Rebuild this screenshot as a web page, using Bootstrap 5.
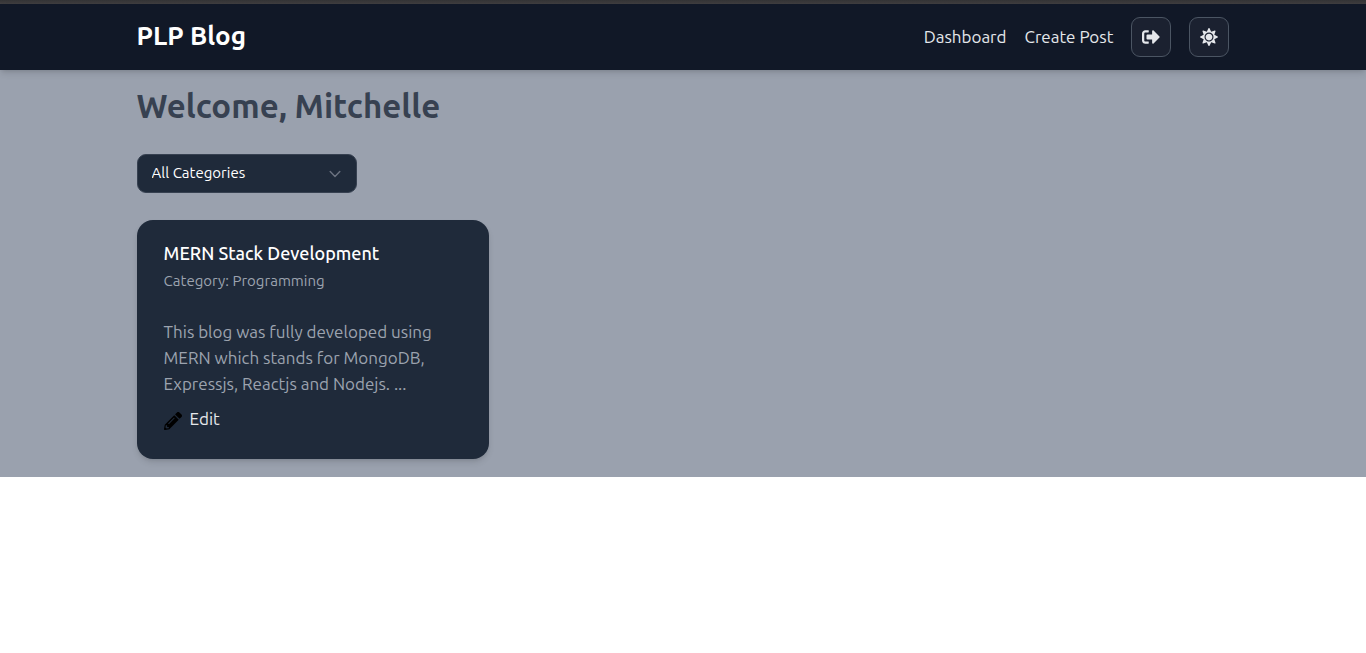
<!DOCTYPE html>
<html lang="en">
<head>
<meta charset="utf-8">
<meta name="viewport" content="width=device-width, initial-scale=1">
<title>PLP Blog</title>
<link href="https://cdn.jsdelivr.net/npm/bootstrap@5.3.0/dist/css/bootstrap.min.css" rel="stylesheet">
<style>
  body { font-family: Ubuntu, "Noto Sans", sans-serif; font-size: 18px; line-height: 26px; background: #fff; }
  .window-edge { height: 4px; background: linear-gradient(#333335, #403e40); }
  .page-width { width: 80%; }
  .site-header { background: #111827; box-shadow: 0 4px 7px -1px rgba(0,0,0,.12), 0 2px 4px -2px rgba(0,0,0,.12); }
  .site-header .navbar { height: 66px; }
  .brand { font-size: 26px; font-weight: 600; line-height: 36px; padding-bottom: 2px; }
  .site-links { gap: 18px; font-size: 17px; }
  .site-links a, .edit-link { color: #e5e7eb; }
  .icon-btn { width: 40px; height: 40px; border: 1px solid #4b5563; border-radius: 9px; background: #1b2130; color: #e5e7eb; }
  .icon-btn svg, .edit-link svg { width: 18px; height: 18px; }
  .posts-area { background: #9aa1ae; padding: 16px 0 18px; }
  .welcome { font-size: 33px; font-weight: 600; line-height: 40px; color: #374151; margin-bottom: 28px; }
  .category-select { width: 220px; height: 39px; padding: 6px 36px 7px 14px; font-size: 15px; line-height: 24px; color: #fff; border: 1px solid #374151; border-radius: 9px; background-color: #1f2a3a;
    background-image: url("data:image/svg+xml,%3Csvg xmlns='http://www.w3.org/2000/svg' viewBox='0 0 20 20' fill='none'%3E%3Cpath d='M6 8l4 4 4-4' stroke='%236b7280' stroke-width='1.2' stroke-linecap='round' stroke-linejoin='round'/%3E%3C/svg%3E");
    background-size: 24px; background-position: right 9px center; margin-bottom: 27px; }
  .post-grid { --bs-gutter-x: 18px; row-gap: 18px; }
  .post-card { background: #1f2a3a; border: 0; border-radius: 16px; padding: 20px 27px 27px; color: #9ca3af; box-shadow: 0 4px 7px -1px rgba(0,0,0,.12), 0 2px 4px -2px rgba(0,0,0,.12); }
  .post-title { font-size: 18px; font-weight: 500; line-height: 26px; color: #fff; margin-bottom: 2px; }
  .post-category { font-size: 15px; line-height: 26px; margin-bottom: 25px; }
  .post-text { font-size: 17px; margin-bottom: 9px; }
  .edit-link { font-size: 17px; }
</style>
</head>
<body>
<div class="window-edge"></div>
<header class="site-header position-relative">
  <nav class="navbar page-width mx-auto p-0 flex-nowrap">
    <a class="brand text-white text-decoration-none" href="#">PLP Blog</a>
    <div class="site-links d-flex align-items-center">
      <a class="text-decoration-none" href="#">Dashboard</a>
      <a class="text-decoration-none" href="#">Create Post</a>
      <button class="icon-btn btn d-flex align-items-center justify-content-center p-0" type="button" aria-label="Log out">
        <svg viewBox="0 0 512 512" fill="currentColor" aria-hidden="true"><path d="M497 273L329 441c-15 15-41 4.500-41-17v-96H152c-13.300 0-24-10.700-24-24v-96c0-13.300 10.700-24 24-24h136V88c0-21.400 25.900-32 41-17l168 168c9.300 9.400 9.300 24.600 0 34zM192 436v-40c0-6.600-5.400-12-12-12H96c-17.700 0-32-14.300-32-32V160c0-17.700 14.300-32 32-32h84c6.600 0 12-5.400 12-12V76c0-6.600-5.400-12-12-12H96c-53 0-96 43-96 96v192c0 53 43 96 96 96h84c6.600 0 12-5.400 12-12z"/></svg>
      </button>
      <button class="icon-btn btn d-flex align-items-center justify-content-center p-0" type="button" aria-label="Light theme">
        <svg viewBox="0 0 512 512" fill="currentColor" aria-hidden="true"><path d="M256 160c-52.900 0-96 43.100-96 96s43.100 96 96 96 96-43.100 96-96-43.100-96-96-96zm246.400 80.500l-94.700-47.300 33.500-100.400c4.500-13.600-8.400-26.500-21.900-21.900l-100.400 33.500-47.400-94.800c-6.400-12.800-24.600-12.800-31 0l-47.300 94.700L92.700 70.800c-13.600-4.500-26.500 8.400-21.900 21.900l33.500 100.400-94.700 47.400c-12.800 6.400-12.800 24.600 0 31l94.700 47.300-33.500 100.500c-4.500 13.600 8.400 26.500 21.900 21.900l100.400-33.500 47.300 94.700c6.400 12.800 24.600 12.800 31 0l47.300-94.700 100.400 33.500c13.600 4.500 26.500-8.400 21.900-21.900l-33.500-100.400 94.700-47.300c13-6.500 13-24.700.2-31.100zm-155.900 106c-49.900 49.900-131.100 49.900-181 0-49.900-49.900-49.900-131.100 0-181 49.900-49.900 131.100-49.900 181 0 49.900 49.900 49.900 131.100 0 181z"/></svg>
      </button>
    </div>
  </nav>
</header>
<main class="posts-area">
  <div class="page-width mx-auto">
    <h1 class="welcome">Welcome, Mitchelle</h1>
    <select class="form-select category-select" id="category" aria-label="Category">
      <option>All Categories</option>
      <option>Programming</option>
    </select>
    <div class="row post-grid">
      <div class="col-12 col-md-6 col-lg-4">
        <article class="card post-card">
          <h2 class="post-title">MERN Stack Development</h2>
          <p class="post-category">Category: Programming</p>
          <p class="post-text">This blog was fully developed using MERN which stands for MongoDB, Expressjs, Reactjs and Nodejs. ...</p>
          <a class="edit-link d-flex align-items-center gap-2 text-decoration-none" href="#">
            <svg class="mt-1" viewBox="0 0 512 512" fill="#000" aria-hidden="true"><path d="M497.900 142.100l-46.100 46.100c-4.700 4.700-12.300 4.700-17 0l-111-111c-4.700-4.700-4.700-12.300 0-17l46.100-46.100c18.700-18.700 49.100-18.700 67.900 0l60.100 60.100c18.800 18.700 18.800 49.100 0 67.900zM284.200 99.800L21.600 362.400.4 483.900c-2.900 16.400 11.400 30.600 27.800 27.800l121.500-21.300 262.600-262.600c4.700-4.700 4.700-12.300 0-17l-111-111c-4.800-4.700-12.400-4.700-17.100 0zM124.100 339.900c-5.500-5.500-5.500-14.300 0-19.800l154-154c5.500-5.500 14.300-5.500 19.800 0s5.500 14.300 0 19.800l-154 154c-5.500 5.500-14.300 5.500-19.800 0zM88 424h48v36.300l-64.500 11.300-31.100-31.100L51.700 376H88v48z"/></svg>
            <span>Edit</span>
          </a>
        </article>
      </div>
    </div>
  </div>
</main>
<script src="https://cdn.jsdelivr.net/npm/bootstrap@5.3.0/dist/js/bootstrap.bundle.min.js"></script>
</body>
</html>
